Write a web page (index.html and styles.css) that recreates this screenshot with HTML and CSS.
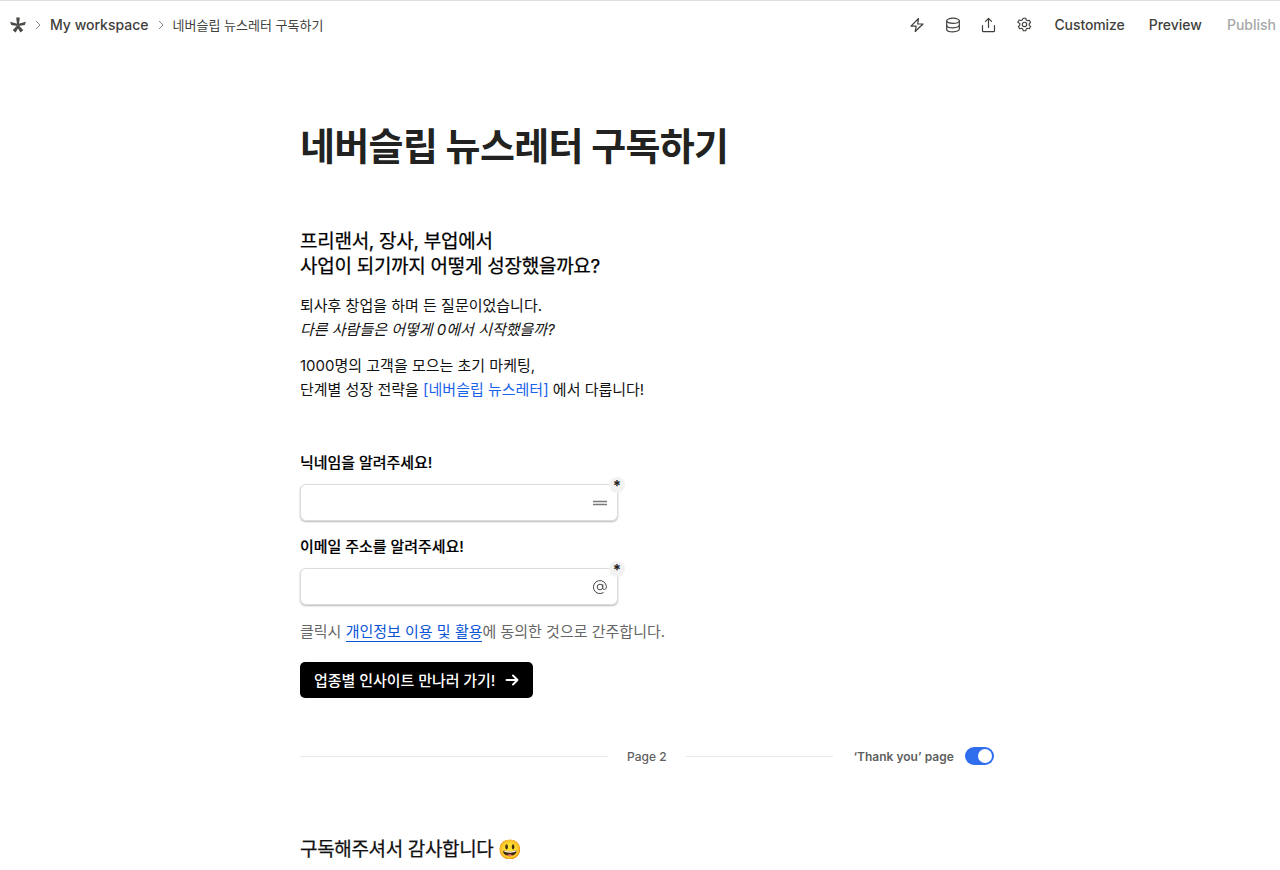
FILE: index.html
```html
<!DOCTYPE html>
<html lang="ko">
<head>
<meta charset="utf-8">
<title>네버슬립 뉴스레터 구독하기</title>
<link rel="stylesheet" href="styles.css">
</head>
<body>
<header class="topbar">
  <nav class="crumbs">
    <svg class="logo" width="16" height="16" viewBox="0 0 16 16"><g fill="#4a4a46"><path d="M6.200 .6h3.600L9 7H7z"/><path d="M15.900 4.700l-1.100 3.300L8.400 9 7.800 6.900z"/><path d="M13.300 13.300l-2.900 2.100L6.900 9.500 8.700 8.200z"/><path d="M2.700 13.300l2.900 2.100L9.100 9.500 7.300 8.200z"/><path d="M.1 4.700l1.100 3.300L7.600 9l.6-2.100z"/></g></svg>
    <svg class="chev" width="8" height="10" viewBox="0 0 8 10"><path d="M2 1l4 4-4 4" fill="none" stroke="#8a8a86" stroke-width="1"/></svg>
    <span class="crumb-strong">My workspace</span>
    <svg class="chev" width="8" height="10" viewBox="0 0 8 10"><path d="M2 1l4 4-4 4" fill="none" stroke="#8a8a86" stroke-width="1"/></svg>
    <span class="crumb">네버슬립 뉴스레터 구독하기</span>
  </nav>
  <div class="actions">
    <div class="icons">
      <svg width="16" height="16" viewBox="0 0 16 16" fill="none" stroke="#3f3f3c" stroke-width="1.200" stroke-linejoin="round"><path d="M9.500 1.500L2 9.200h5.200l-1 5.300L14 7H8.700z"/></svg>
      <svg width="16" height="16" viewBox="0 0 16 16" fill="none" stroke="#3f3f3c" stroke-width="1.200"><ellipse cx="8" cy="3.800" rx="6.300" ry="2.600"/><path d="M1.700 3.800v8.400c0 1.400 2.800 2.600 6.300 2.600s6.300-1.200 6.300-2.600V3.800"/><path d="M1.700 8.200c0 1.400 2.800 2.600 6.300 2.600s6.300-1.200 6.300-2.600"/></svg>
      <svg width="16" height="16" viewBox="0 0 16 16" fill="none" stroke="#3f3f3c" stroke-width="1.200" stroke-linecap="round" stroke-linejoin="round"><path d="M7.500 10.500V1.500M4.500 4.300l3-3 3 3M1.500 8.500v5.200c0 .6.400 1 1 1h10c.6 0 1-.4 1-1V8.500"/></svg>
      <svg width="16" height="16" viewBox="0 0 16 16" fill="none" stroke="#3f3f3c" stroke-width="1.100" stroke-linejoin="round"><path transform="translate(-.5 0)" d="M6.700 1.200h2.600l.4 1.900 1.300.7 1.800-.6 1.300 2.300-1.400 1.200v1.600l1.400 1.200-1.300 2.300-1.800-.6-1.300.7-.4 1.900H6.700l-.4-1.900-1.300-.7-1.800.6-1.300-2.300 1.400-1.200V6.500L1.300 5.300l1.300-2.300 1.800.6 1.300-.7z"/><circle cx="7.500" cy="7.400" r="2.200"/></svg>
    </div>
    <span class="action customize">Customize</span>
    <span class="action">Preview</span>
    <span class="action muted">Publish</span>
  </div>
</header>

<main class="page">
  <h1 class="title">네버슬립 뉴스레터 구독하기</h1>
  <h2 class="lead">프리랜서, 장사, 부업에서<br>사업이 되기까지 어떻게 성장했을까요?</h2>
  <p class="body">퇴사후 창업을 하며 든 질문이었습니다.<br><em>다른 사람들은 어떻게 0에서 시작했을까?</em></p>
  <p class="body second">1000명의 고객을 모으는 초기 마케팅,<br>단계별 성장 전략을 <span class="link">[네버슬립 뉴스레터]</span> 에서 다룹니다!</p>

  <form class="form">
    <label class="label first">닉네임을 알려주세요!</label>
    <div class="field">
      <svg class="field-icon" width="16" height="16" viewBox="0 0 16 16"><path d="M1 6.500h14M1 9.500h14" stroke="#7a7a78" stroke-width="1.300"/></svg>
      <span class="req">*</span>
    </div>
    <label class="label">이메일 주소를 알려주세요!</label>
    <div class="field">
      <svg class="field-icon" width="16" height="16" viewBox="0 0 16 16" fill="none" stroke="#4a4a48" stroke-width="1"><circle cx="8" cy="8" r="2.800"/><path d="M10.800 5.200v3.600c0 1.100.7 1.700 1.600 1.700s2-.8 2-2.700A6.500 6.500 0 1 0 11.500 13.500"/></svg>
      <span class="req">*</span>
    </div>
    <p class="consent">클릭시 <span class="consent-link">개인정보 이용 및 활용</span>에 동의한 것으로 간주합니다.</p>
    <div class="submit"><span class="submit-text">업종별 인사이트 만나러 가기!</span>
      <svg width="14" height="14" viewBox="0 0 14 14" fill="none" stroke="#fff" stroke-width="1.900" stroke-linecap="round" stroke-linejoin="round"><path d="M1.500 7h11M8 2.500L12.500 7 8 11.500"/></svg>
    </div>
  </form>

  <div class="divider">
    <span class="rule left"></span>
    <span class="page-name">Page 2</span>
    <span class="rule right"></span>
    <span class="thanks">‘Thank you’ page</span>
    <span class="toggle"><span class="knob"></span></span>
  </div>

  <h2 class="thanks-title">구독해주셔서 감사합니다 😃</h2>
</main>
</body>
</html>
```
FILE: styles.css
```css
* { box-sizing: border-box; }
html, body { margin: 0; padding: 0; height: 100%; overflow: hidden; }
body {
  background: #fff;
  color: #111;
  font-family: Inter, "Noto Sans CJK KR", sans-serif;
  border-top: 1px solid #dedede;
}
.topbar {
  display: flex;
  justify-content: space-between;
  align-items: center;
  height: 47px;
  padding: 0 4px 0 10px;
}
.crumbs { display: flex; align-items: center; font-size: 14px; color: #3f3f3c; }
.logo { margin-right: 8px; }
.chev { margin-right: 8px; }
.crumb-strong { font-weight: 500; margin-right: 8px; }
.crumb { font-size: 13px; }
.actions { display: flex; align-items: center; gap: 24px; font-size: 14px; font-weight: 500; color: #3f3f3c; }
.icons { display: flex; gap: 20px; margin-right: -3px; }
.customize { letter-spacing: -0.1px; }
.muted { color: #a8a8a8; margin-left: 1px; }
.page { margin-left: 300px; width: 700px; }
.title {
  margin: 75px 0 0;
  font-size: 38px;
  line-height: 46px;
  font-weight: 700;
  letter-spacing: -0.65px;
  color: #222220;
}
.lead {
  margin: 60px 0 0;
  font-size: 19px;
  line-height: 25px;
  font-weight: 400;
  letter-spacing: -0.27px;
  color: #000;
  -webkit-text-stroke: 0.25px #000;
}
.body { margin: 15px 0 0; font-size: 15px; line-height: 24px; color: #111; }
.body.second { margin-top: 12px; }
.link { color: #1a62e8; }
.form { margin-top: 49px; }
.label { display: block; margin: 14px 0 9px; font-size: 15px; line-height: 24px; font-weight: 500; letter-spacing: -0.05px; color: #000; -webkit-text-stroke: 0.15px #000; }
.label.first { margin-top: 0; }
.field {
  position: relative;
  width: 318px;
  height: 37px;
  border: 1px solid #dcdcdc;
  border-radius: 6px;
  background: #fff;
  box-shadow: 0 1px 2px rgba(0,0,0,.28);
  display: flex;
  align-items: center;
  justify-content: flex-end;
  padding-right: 9px;
}
.req {
  position: absolute;
  top: -8px;
  right: -8px;
  width: 16px;
  height: 16px;
  border-radius: 50%;
  background: #f2f2f2;
  font-size: 15px;
  line-height: 17px;
  font-weight: 700;
  text-align: center;
  color: #222;
}
.consent { margin: 15px 0 0; font-size: 15px; line-height: 24px; color: #666; }
.consent-link { color: #0a55d6; border-bottom: 1px solid #0a55d6; }
.submit {
  display: inline-flex;
  align-items: center;
  gap: 10px;
  margin-top: 18px;
  height: 36px;
  padding: 0 14px 1px;
  border-radius: 5px;
  background: #000;
  color: #fff;
  font-size: 15px;
  font-weight: 500;
}
.submit-text { letter-spacing: -0.05px; }
.divider { display: flex; align-items: center; margin-top: 48px; font-size: 12px; font-weight: 500; color: #5f5f5f; height: 20px; }
.rule { height: 1px; background: #e8e8e8; }
.rule.left { width: 308px; }
.rule.right { width: 147px; }
.page-name { margin: 0 19px 0 19px; }
.thanks { margin-left: 21px; font-weight: 600; }
.toggle { margin-left: 11px; width: 29px; height: 18px; border-radius: 9px; background: #2f6fed; padding: 2px; display: flex; justify-content: flex-end; }
.knob { width: 14px; height: 14px; border-radius: 50%; background: #fff; }
.thanks-title { margin: 70px 0 0; font-size: 19px; line-height: 28px; font-weight: 400; letter-spacing: -0.35px; color: #111; -webkit-text-stroke: 0.25px #111; }
```
